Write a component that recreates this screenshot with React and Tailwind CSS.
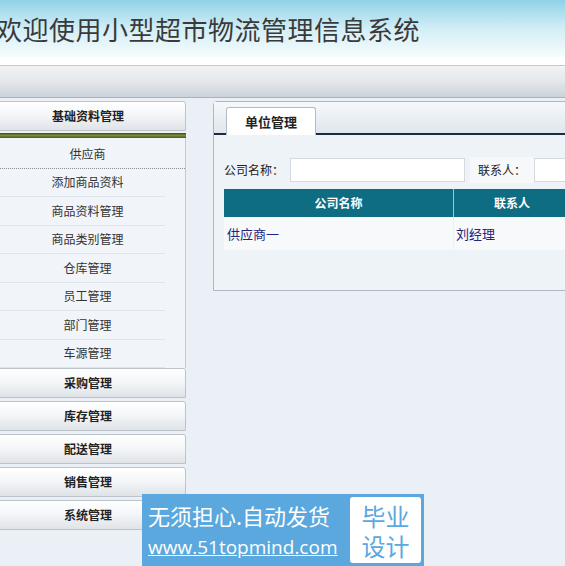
import React from 'react';

const items = ['供应商', '添加商品资料', '商品资料管理', '商品类别管理', '仓库管理', '员工管理', '部门管理', '车源管理'];
const groups = ['采购管理', '库存管理', '配送管理', '销售管理', '系统管理'];

const GroupHead = ({ title, className = '' }) => (
    <div className={`h-[30px] flex items-center justify-center border border-[#bcc3ca] rounded-tr-[3px] bg-gradient-to-b from-white via-[#f3f5f7] to-[#dfe3e7] text-[12px] font-bold text-[#222] ${className}`}>
        {title}
    </div>
);

const App = () => {
    return (
        <div className="relative w-[565px] h-[566px] overflow-hidden bg-[#eaf0f6]"
            style={{ fontFamily: '"Noto Sans CJK SC", "Liberation Sans", sans-serif' }}>

            {/* Header */}
            <div className="h-[57px] flex items-center bg-gradient-to-b from-[#8fd2e8] via-[#d2eef6] to-[#f7fcfd]">
                <h1 className="ml-[-4px] text-[26px] leading-none tracking-[0.5px] text-[#3a3a3a] font-normal whitespace-nowrap">欢迎使用小型超市物流管理信息系统</h1>
            </div>
            <div className="h-[8px] bg-white" />
            <div className="h-[33px] border-t border-[#c4cad0] border-b border-b-[#a9b1b9] bg-gradient-to-b from-[#f1f3f5] via-[#e4e8ec] to-[#cbd2d9]" />

            <div className="flex items-start pt-[3px] ml-[-10px]">
                {/* Sidebar */}
                <div className="w-[196px] shrink-0">
                    <GroupHead title="基础资料管理" />
                    <div className="h-[5px] mt-[2px] bg-gradient-to-b from-[#3e4a16] via-[#7d8a3a] to-[#4a5620]" />
                    <div className="border-r border-[#c3cad1] bg-[#f1f5f9] pt-[2px]">
                        {items.map((t, i) => (
                            <div key={t}
                                className={`h-[28.5px] flex items-center justify-center text-[12px] text-[#333] ${i === 0 ? 'border-b border-dotted border-[#8a8f94]' : 'mr-[20px] pl-[20px] border-b border-[#dfe5ea]'}`}>
                                {t}
                            </div>
                        ))}
                    </div>
                    <div className="flex flex-col gap-[3px]">
                        {groups.map(g => <GroupHead key={g} title={g} />)}
                    </div>
                </div>

                {/* Main panel */}
                <div className="ml-[27px] w-[380px] shrink-0 border border-[#aeb6be] rounded-tl-[4px] bg-[#eef3f8]">
                    <div className="relative h-[33px] flex items-end bg-gradient-to-b from-[#f6f9fb] to-[#dfe6ed] border-b-2 border-[#1d2b40]">
                        <div className="ml-[12px] mb-[-2px] w-[90px] h-[28px] flex items-center justify-center bg-white border border-[#b3bbc3] border-b-0 rounded-t-[3px] text-[13px] font-bold text-[#222]">
                            单位管理
                        </div>
                    </div>
                    <div className="px-[10px] pt-[22px] pb-[40px]">
                        <div className="flex items-center h-[26px] text-[12px] text-[#222]">
                            <span className="w-[66px]">公司名称：</span>
                            <div className="w-[175px] h-[24px] bg-white border border-[#d4dae0]" />
                            <span className="ml-[5px] px-[8px] h-[26px] flex items-center bg-[#f6f8fa]">联系人：</span>
                            <div className="flex-1 h-[24px] bg-white border border-[#d4dae0]" />
                        </div>
                        <div className="mt-[6px] flex h-[28px] bg-[#0f6d83] text-white text-[12px] font-bold">
                            <div className="w-[230px] flex items-center justify-center border-r border-[#9fc4cf]">公司名称</div>
                            <div className="w-[116px] flex items-center justify-center">联系人</div>
                        </div>
                        <div className="flex h-[33px] bg-[#f7f9fb] text-[13px] text-[#1f2580]">
                            <div className="w-[230px] flex items-center pl-[3px] border-r border-[#eef1f4]">供应商一</div>
                            <div className="flex-1 flex items-center pl-[2px]">刘经理</div>
                        </div>
                    </div>
                </div>
            </div>

            {/* Watermark */}
            <div className="absolute left-[142px] top-[494px] w-[282px] h-[72px] bg-[#5aa8de] flex items-center pl-[6px] pr-[3px]">
                <div className="flex-1 flex flex-col text-white">
                    <span className="text-[22px] leading-[28px] whitespace-nowrap">无须担心.自动发货</span>
                    <span className="text-[19px] leading-[24px] underline mt-[6px] whitespace-nowrap" style={{ fontFamily: '"Open Sans", "Liberation Sans", sans-serif' }}>www.51topmind.com</span>
                </div>
                <div className="w-[71px] h-[66px] bg-white rounded-[3px] flex flex-col items-center justify-center gap-[1px] text-[#5aa8de] text-[24px] leading-[29px]">
                    <span>毕业</span>
                    <span>设计</span>
                </div>
            </div>
        </div>
    );
};

export default App;
